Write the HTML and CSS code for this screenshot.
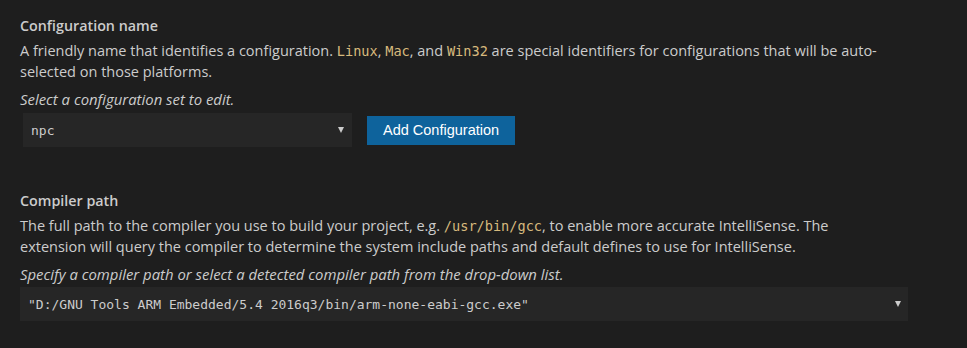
FILE: index.html
```html
<!DOCTYPE html>
<html lang="en">
<head>
    <meta charset="UTF-8">
    <title>C/C++ Configurations</title>
    <link rel="stylesheet" href="styles.css">
</head>
<body>
    <div class="settings">
        <div class="setting">
            <div class="setting-title">Configuration name</div>
            <div class="setting-desc">
                A friendly name that identifies a configuration. <code>Linux</code>, <code>Mac</code>, and <code>Win32</code> are special identifiers for configurations that will be auto-selected on those platforms.
            </div>
            <div class="setting-hint">Select a configuration set to edit.</div>
            <div class="config-row">
                <div class="dropdown dropdown-small">
                    <span>npc</span>
                    <span class="arrow"></span>
                </div>
                <button class="btn-primary">Add Configuration</button>
            </div>
        </div>

        <div class="setting setting-compiler">
            <div class="setting-title">Compiler path</div>
            <div class="setting-desc">
                The full path to the compiler you use to build your project, e.g. <code>/usr/bin/gcc</code>, to enable more accurate IntelliSense. The extension will query the compiler to determine the system include paths and default defines to use for IntelliSense.
            </div>
            <div class="setting-hint">Specify a compiler path or select a detected compiler path from the drop-down list.</div>
            <div class="dropdown dropdown-wide">
                <span>"D:/GNU Tools ARM Embedded/5.4 2016q3/bin/arm-none-eabi-gcc.exe"</span>
                <span class="arrow"></span>
            </div>
        </div>
    </div>
</body>
</html>
```

FILE: styles.css
```css
* {
    margin: 0;
    padding: 0;
    box-sizing: border-box;
}

body {
    background: #1e1e1e;
    color: #cccccc;
    font-family: "Open Sans", "Noto Sans", sans-serif;
    font-size: 14.5px;
    padding: 15px 20px 0 20px;
}

.settings {
    width: 888px;
}

.setting-title {
    font-weight: 600;
    font-size: 14.3px;
    line-height: 22px;
    color: #cccccc;
}

.setting-desc {
    max-width: 870px;
    line-height: 21px;
    margin-top: 3px;
}

.setting-hint {
    font-style: italic;
    font-size: 14.9px;
    line-height: 21px;
    margin-top: 7px;
}

code {
    font-family: "DejaVu Sans Mono", "Liberation Mono", monospace;
    font-size: 13.6px;
    line-height: 1;
    color: #d7ba7d;
}

.config-row {
    display: flex;
    align-items: center;
    gap: 15px;
    margin-top: 3px;
    padding-left: 3px;
}

.dropdown {
    display: flex;
    align-items: center;
    justify-content: space-between;
    background: #262626;
    font-family: "DejaVu Sans Mono", "Liberation Mono", monospace;
    font-size: 13px;
    color: #cccccc;
    height: 34px;
    padding: 0 8px 0 8px;
}

.dropdown-small {
    width: 329px;
}

.dropdown-wide {
    width: 888px;
    margin-top: 2px;
    padding-right: 7px;
}

.arrow {
    width: 0;
    height: 0;
    border-left: 3.5px solid transparent;
    border-right: 3.5px solid transparent;
    border-top: 6px solid #cccccc;
}

.btn-primary {
    background: #0e639c;
    color: #ffffff;
    border: none;
    font-family: "Liberation Sans", Arial, sans-serif;
    font-size: 14.5px;
    height: 29px;
    padding: 0 16px;
}

.setting-compiler {
    margin-top: 43px;
}
```
